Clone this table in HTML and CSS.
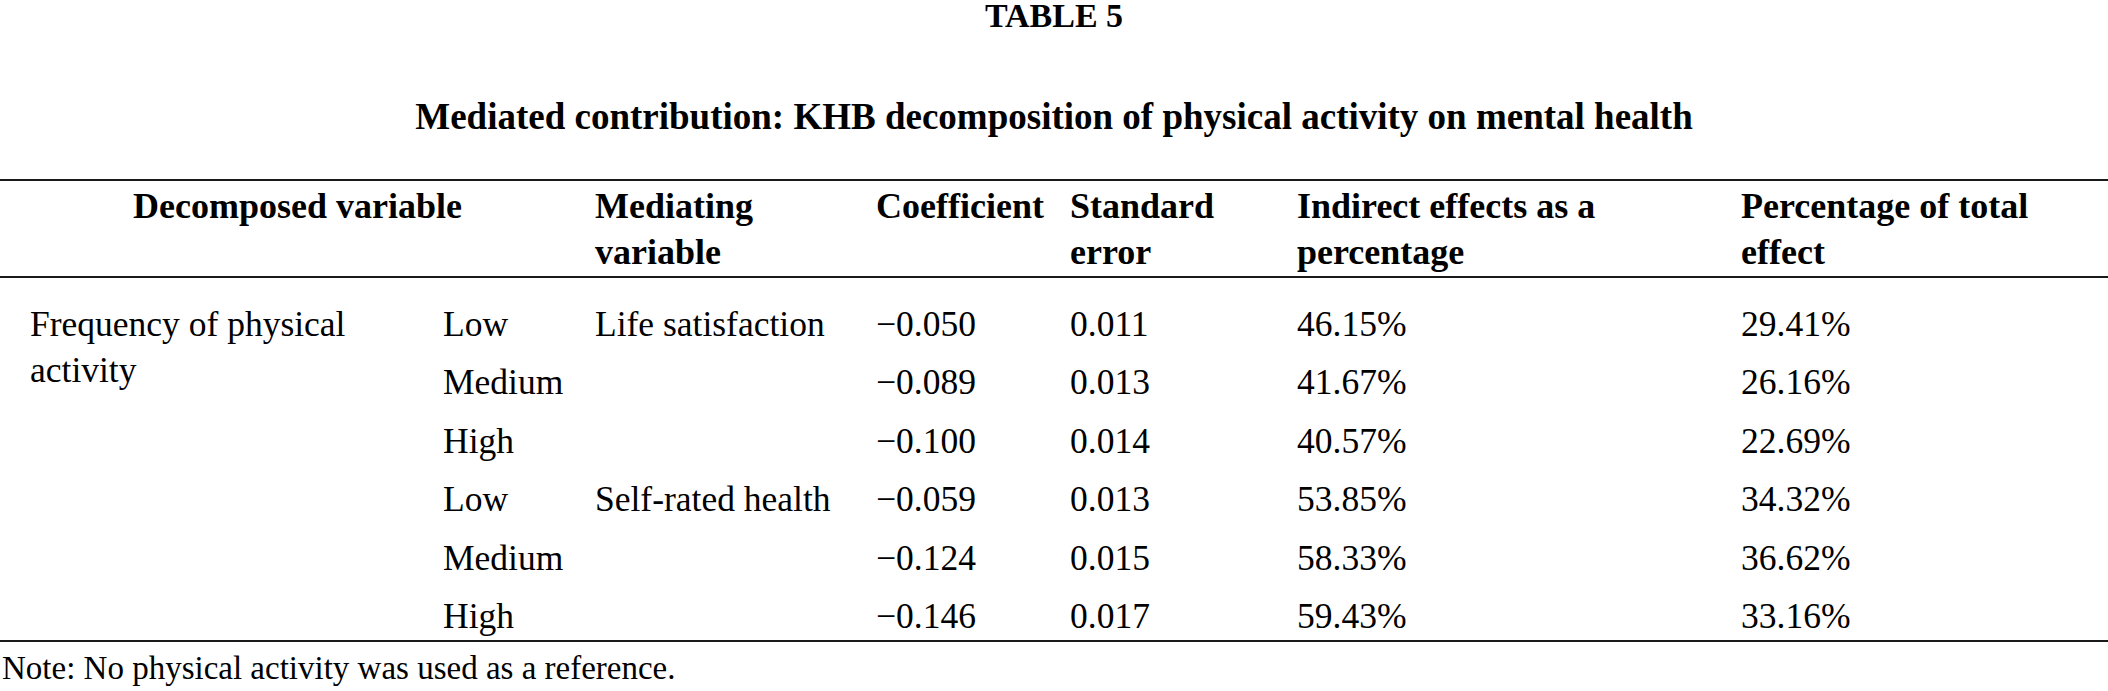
FILE: index.html
```html
<!DOCTYPE html>
<html lang="en">
<head>
<meta charset="utf-8">
<title>Table 5</title>
<link rel="stylesheet" href="styles.css">
</head>
<body>
<div class="page">
  <div class="label">TABLE 5</div>
  <div class="title">Mediated contribution: KHB decomposition of physical activity on mental health</div>
  <table class="data">
    <colgroup>
      <col class="c1"><col class="c2"><col class="c3"><col class="c4"><col class="c5"><col class="c6"><col class="c7">
    </colgroup>
    <thead>
      <tr>
        <th colspan="2" class="center">Decomposed variable</th>
        <th>Mediating<br>variable</th>
        <th>Coefficient</th>
        <th>Standard<br>error</th>
        <th>Indirect effects as a<br>percentage</th>
        <th>Percentage of total<br>effect</th>
      </tr>
    </thead>
    <tbody>
      <tr class="first">
        <td rowspan="6" class="var">Frequency of physical<br>activity</td>
        <td>Low</td>
        <td rowspan="3" class="med">Life satisfaction</td>
        <td>−0.050</td>
        <td>0.011</td>
        <td>46.15%</td>
        <td>29.41%</td>
      </tr>
      <tr>
        <td>Medium</td>
        <td>−0.089</td>
        <td>0.013</td>
        <td>41.67%</td>
        <td>26.16%</td>
      </tr>
      <tr>
        <td>High</td>
        <td>−0.100</td>
        <td>0.014</td>
        <td>40.57%</td>
        <td>22.69%</td>
      </tr>
      <tr>
        <td>Low</td>
        <td rowspan="3" class="med">Self-rated health</td>
        <td>−0.059</td>
        <td>0.013</td>
        <td>53.85%</td>
        <td>34.32%</td>
      </tr>
      <tr>
        <td>Medium</td>
        <td>−0.124</td>
        <td>0.015</td>
        <td>58.33%</td>
        <td>36.62%</td>
      </tr>
      <tr class="last">
        <td>High</td>
        <td>−0.146</td>
        <td>0.017</td>
        <td>59.43%</td>
        <td>33.16%</td>
      </tr>
    </tbody>
  </table>
  <div class="note">Note: No physical activity was used as a reference.</div>
</div>
</body>
</html>
```

FILE: styles.css
```css
html, body {
  margin: 0;
  padding: 0;
  background: #ffffff;
}

body {
  font-family: "Liberation Serif", "Times New Roman", serif;
  color: #000000;
}

.page {
  width: 2108px;
}

.label {
  font-size: 34px;
  font-weight: bold;
  line-height: 32px;
  text-align: center;
}

.title {
  margin-top: 62px;
  font-size: 37px;
  font-weight: bold;
  line-height: 46px;
  text-align: center;
}

.data {
  margin-top: 39px;
  width: 2108px;
  table-layout: fixed;
  border-collapse: collapse;
  border-top: 2px solid #1a1a1a;
  border-bottom: 2px solid #1a1a1a;
}

.c1 { width: 443px; }
.c2 { width: 152px; }
.c3 { width: 281px; }
.c4 { width: 194px; }
.c5 { width: 227px; }
.c6 { width: 444px; }
.c7 { width: 367px; }

.data thead tr {
  border-bottom: 2px solid #1a1a1a;
}

.data th {
  font-size: 36px;
  font-weight: bold;
  line-height: 46px;
  text-align: left;
  vertical-align: top;
  padding: 2px 0 1px 0;
  white-space: nowrap;
}

.data th.center {
  text-align: center;
}

.data td {
  font-size: 35.5px;
  line-height: 46px;
  text-align: left;
  vertical-align: top;
  padding: 6.2px 0;
  white-space: nowrap;
}

.data tr.first td {
  padding-top: 23px;
}

.data tr.last td {
  padding-bottom: 1px;
}

.data td.var {
  padding-left: 30px;
}

.note {
  margin-top: 6px;
  font-size: 33px;
  line-height: 40px;
  padding-left: 2px;
}
```
